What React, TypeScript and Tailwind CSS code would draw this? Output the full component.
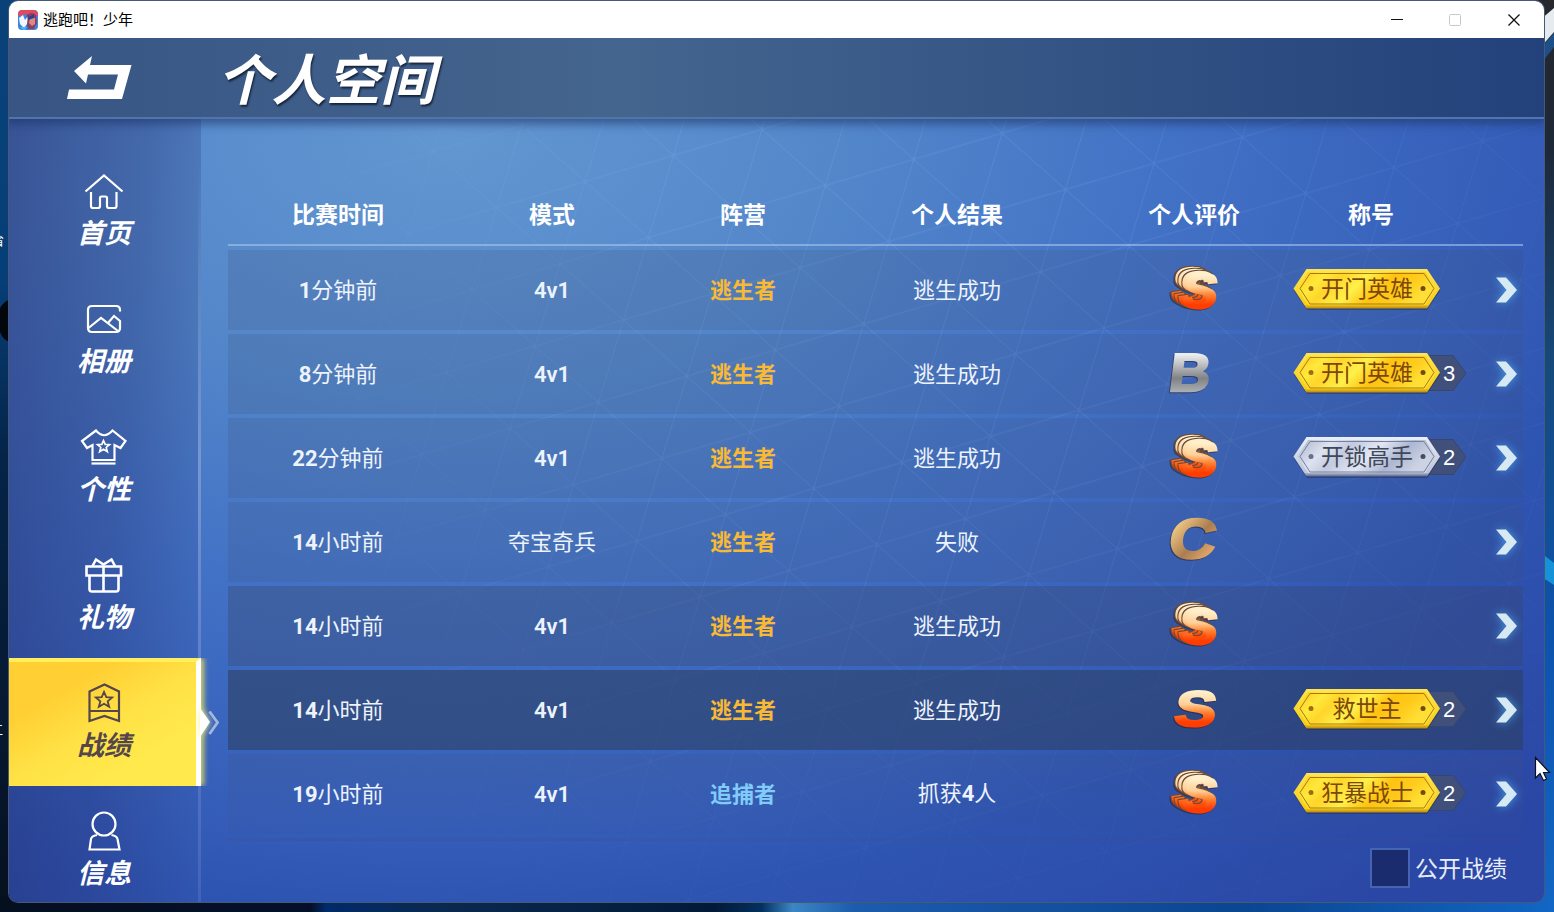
import { ReactNode } from "react";
import clsx from "clsx";

type Grade = "SSSS" | "S" | "B" | "C";

interface Match {
  time: [string, string];
  mode: string;
  hunter?: boolean;
  result: ReactNode;
  grade: Grade;
  title?: string;
  silver?: boolean;
  count?: number;
  bg: string;
}

const ROW_BG = "bg-[#40507a]/20";

const matches: Match[] = [
  { time: ["1", "分钟前"], mode: "4v1", result: "逃生成功", grade: "SSSS", title: "开门英雄", bg: ROW_BG },
  { time: ["8", "分钟前"], mode: "4v1", result: "逃生成功", grade: "B", title: "开门英雄", count: 3, bg: ROW_BG },
  { time: ["22", "分钟前"], mode: "4v1", result: "逃生成功", grade: "SSSS", title: "开锁高手", silver: true, count: 2, bg: ROW_BG },
  { time: ["14", "小时前"], mode: "夺宝奇兵", result: "失败", grade: "C", bg: ROW_BG },
  { time: ["14", "小时前"], mode: "4v1", result: "逃生成功", grade: "SSSS", bg: "bg-[#3a4468]/35" },
  { time: ["14", "小时前"], mode: "4v1", result: "逃生成功", grade: "S", title: "救世主", count: 2, bg: "bg-[#2d4062]/60" },
  {
    time: ["19", "小时前"],
    mode: "4v1",
    hunter: true,
    result: (
      <>
        抓获<b className="font-[Roboto] font-bold">4</b>人
      </>
    ),
    grade: "SSSS",
    title: "狂暴战士",
    count: 2,
    bg: "bg-linear-to-b from-[#40507a]/20 to-[#40507a]/5",
  },
];

const GRID = "grid grid-cols-[220px_208px_174px_254px_220px_134px_1fr] items-center";

const STAR = "M0 -7 L2 -2.4 L7 -2.1 L3.2 1.1 L4.5 6 L0 3.3 L-4.5 6 L-3.2 1.1 L-7 -2.1 L-2 -2.4 Z";

const navItems = [
  {
    label: "首页",
    icon: (
      <>
        <path d="M5.5 19.5 24 3.5 42.5 19.5" />
        <path d="M11 20v14q0 2 2 2h5q2 0 2-2v-8q0-1.500 1.500-1.500h4q1.500 0 1.500 1.500v8q0 2 2 2h5.500q2 0 2-2V20" />
      </>
    ),
  },
  {
    label: "相册",
    icon: (
      <>
        <path d="M40 11.500V10q0-4-4-4H12q-4 0-4 4v18q0 4 4 4h24q4 0 4-4v-7l-6-5-6.500 7.500" />
        <path d="M8.500 28 21 18l17 13" />
      </>
    ),
  },
  {
    label: "个性",
    icon: (
      <>
        <path d="M16 2.500 2 13l5 7 5.500-3V32h22V17l6 3 5-7L32.500 2.500Q24 12 16 2.500Z" />
        <path d="M11.500 35.500h24" />
        <path d={STAR} transform="translate(23.500 18.500) scale(.85)" strokeWidth="2" />
      </>
    ),
  },
  {
    label: "礼物",
    icon: (
      <>
        <path d="M6.500 10.500h34.500v9H6.500zM9.500 19.500V33q0 2.500 2.500 2.500h24q2.500 0 2.500-2.500V19.500M23.500 10.500v25" strokeWidth="2.600" />
        <path d="M12.500 10 16 3.500l7.500 5L31.500 3.500 35 10" strokeWidth="2.600" />
      </>
    ),
  },
  {
    label: "战绩",
    icon: (
      <>
        <path d="M9.500 7.500 24.500 0.500 39 7.500V37L24.500 32 9.500 37ZM9.500 27h29.500" />
        <path d={STAR} transform="translate(24 16) scale(1.150)" strokeWidth="1.600" />
      </>
    ),
  },
  {
    label: "信息",
    icon: (
      <>
        <circle cx="24" cy="12" r="11.500" />
        <path d="M17 23q-5.500 1-6 4L9.500 37.500h30L37.500 27q-.5-3-6-4" />
      </>
    ),
  },
];

const Wallpaper = () => (
  <svg className="absolute inset-0 h-full w-full" viewBox="0 0 1554 912" preserveAspectRatio="none">
    <defs>
      <linearGradient id="wallLeft" x1="0" y1="0" x2="0" y2="1">
        <stop offset="0" stopColor="#0a4278" />
        <stop offset=".3" stopColor="#063f78" />
        <stop offset=".5" stopColor="#052448" />
        <stop offset="1" stopColor="#06101f" />
      </linearGradient>
      <linearGradient id="wallRight" x1="0" y1="0" x2="0" y2="1">
        <stop offset="0" stopColor="#26282c" />
        <stop offset=".16" stopColor="#1d2838" />
        <stop offset=".4" stopColor="#164a7c" />
        <stop offset=".7" stopColor="#0d53ae" />
        <stop offset="1" stopColor="#1466c4" />
      </linearGradient>
      <linearGradient id="wallBottom" x1="0" y1="0" x2="1" y2="0">
        <stop offset="0" stopColor="#040f20" />
        <stop offset=".2" stopColor="#04102a" />
        <stop offset=".21" stopColor="#002a68" />
        <stop offset=".28" stopColor="#0a2950" />
        <stop offset=".46" stopColor="#021a38" />
        <stop offset=".49" stopColor="#03305e" />
        <stop offset=".51" stopColor="#3b86c4" />
        <stop offset=".55" stopColor="#1c5cac" />
        <stop offset=".8" stopColor="#0a4590" />
        <stop offset="1" stopColor="#1266c4" />
      </linearGradient>
    </defs>
    <rect width="1554" height="4" fill="#35394d" />
    <rect width="20" height="912" fill="url(#wallLeft)" />
    <rect x="1530" width="24" height="912" fill="url(#wallRight)" />
    <rect y="896" width="1554" height="16" fill="url(#wallBottom)" />
    <path d="M0 308q5-8 10-8v42Q3 340 0 332Z" fill="#02060d" />
    <path d="M1540 20 1554 8v24l-14 16Z" fill="#e6ebf0" />
    <path d="M1540 49 1554 33v14l-14 18Z" fill="#1d4f88" />
    <path d="M1540 552 1554 563v22l-14-9Z" fill="#1592d8" />
  </svg>
);

// Triangular lattice, one cell skewed along the two main directions
const Mesh = () => (
  <svg className="absolute inset-0 h-full w-full">
    <defs>
      <pattern
        id="mesh"
        width="100"
        height="100"
        patternUnits="userSpaceOnUse"
        patternTransform="matrix(.634 .562 -.25 .823 835.500 135.700)"
      >
        <path d="M0 50H100M50 0V100M0 100 100 0" fill="none" stroke="#9cc4ff" strokeWidth="1.300" />
        <circle cx="50" cy="50" r="2.300" fill="#9cc4ff" />
      </pattern>
      <linearGradient id="meshFade" x1="0" y1="0" x2="1" y2="0">
        <stop offset=".15" stopColor="#fff" stopOpacity="0" />
        <stop offset=".45" stopColor="#fff" stopOpacity=".16" />
        <stop offset=".7" stopColor="#fff" stopOpacity=".15" />
        <stop offset="1" stopColor="#fff" stopOpacity=".05" />
      </linearGradient>
      <linearGradient id="meshDown" x1="0" y1="0" x2="0" y2="1">
        <stop offset=".45" stopColor="#000" stopOpacity="0" />
        <stop offset=".95" stopColor="#000" stopOpacity=".8" />
      </linearGradient>
      <mask id="meshMask">
        <rect width="100%" height="100%" fill="url(#meshFade)" />
        <rect width="100%" height="100%" fill="url(#meshDown)" />
      </mask>
    </defs>
    <rect width="100%" height="100%" fill="url(#mesh)" mask="url(#meshMask)" />
  </svg>
);

const TitleBar = () => (
  <div className="relative z-20 flex h-[37px] shrink-0 items-center bg-white pl-[9px]">
    <svg width="20" height="20" viewBox="0 0 20 20">
      <rect width="20" height="20" rx="4" fill="#3d86de" />
      <path d="M0 5q0-5 5-5h10q5 0 5 5v1L10 4 0 6Z" fill="#e5485a" />
      <path d="M9 5q5-4 9 0l1 8-3 6h-6l-2-8Z" fill="#8a3f63" />
      <path d="M12 8h5v6l-3 2-3-3Z" fill="#d98a84" />
      <path d="M1 8 5 5l2 5 3-4-1 8-3 4-4-4Z" fill="#f1f6ff" />
      <path d="M9 4l2 3 5-3v4l-6 2Z" fill="#33408f" />
      <path d="M2 17h7l-2 3H5Z" fill="#4fb4f2" />
    </svg>
    <span className="ml-[5px] pb-[2px] text-[15px] leading-5 text-black">逃跑吧！少年</span>
    <svg className="mr-[23px] ml-auto" width="130" height="14" viewBox="0 0 130 14" fill="none">
      <path d="M0 6.500h12" stroke="#111" />
      <rect x="58.500" y="1.500" width="11" height="11" rx="1" stroke="#c8c8c8" />
      <path d="M117.500 1.500 128.500 12.500M128.500 1.500 117.500 12.500" stroke="#111" strokeWidth="1.300" />
    </svg>
  </div>
);

const Header = () => (
  <header className="relative z-10 h-[81px] shrink-0 border-b-2 border-[#5175aa] bg-linear-to-r from-[#385584] via-[#44658e] via-40% to-[#23417b] shadow-[0_2px_9px_3px_rgba(28,50,100,0.6)]">
    <div className="flex h-full items-center">
      <svg className="ml-[58px]" width="66" height="46" viewBox="0 0 66 46">
        <path d="M25 1 7 16 19 28.500 21 19.500H51L47 34.500H2L0 44H55L64.500 10H23Z" fill="#fff" />
      </svg>
      <h1 className="ml-[84px] text-[54.5px] leading-none font-bold whitespace-nowrap text-white italic [text-shadow:1px_2px_2px_rgba(15,25,45,0.85)]">
        个人空间
      </h1>
    </div>
  </header>
);

const Sidebar = () => (
  <nav className="relative w-[192px] shrink-0 bg-[linear-gradient(95deg,rgba(34,40,104,0.52),rgba(38,52,120,0.38)_55%,rgba(60,95,170,0.12))] pt-[27px]">
    <div className="absolute top-[40px] right-0 bottom-0 w-[3px] bg-linear-to-b from-[#7f9fd6]/0 via-[#84a0d6]/80 via-40% to-[#4a68bc]/70" />
    {navItems.map(({ label, icon }) => {
      const active = label === "战绩";
      return (
        <div
          key={label}
          className={clsx(
            "relative flex h-[128px] flex-col items-center",
            active
              ? "border-t-4 border-r-[5px] border-t-[#ffef5c] border-r-white bg-[linear-gradient(150deg,#ffcf33_25%,#ffe145_50%,#ffe94c_75%)] pt-[22px] text-[#54464a] shadow-[3px_0_5px_rgba(255,240,80,0.75)] [clip-path:inset(0_-26px_0_0)]"
              : "pt-[26px] text-white"
          )}
        >
          <svg
            className={clsx("overflow-visible", active ? "ml-[3px]" : "-ml-[2px]")}
            width="48"
            height="38"
            viewBox="0 0 48 38"
            fill="none"
            stroke="currentColor"
            strokeWidth="2.200"
          >
            {icon}
          </svg>
          <span
            className={clsx(
              "mt-[7px] text-[27px] leading-[30px] font-bold italic",
              active ? "ml-[3px]" : "-ml-[2px]"
            )}
          >
            {label}
          </span>
          {active && (
            <svg className="absolute top-[42px] -right-[24px] overflow-visible" width="20" height="36" viewBox="0 0 20 36">
              <path d="M0 4 10 18 0 33Z" fill="#fff" className="drop-shadow-[0_0_3px_#fff27a]" />
              <path d="M9.500 7.500 17.500 18.500 9.500 30" fill="none" stroke="#a3b7da" strokeWidth="2.800" />
            </svg>
          )}
        </div>
      );
    })}
  </nav>
);

const SharedDefs = () => (
  <svg className="absolute h-0 w-0">
    <defs>
      <linearGradient id="gradeS" x1="0" y1="0" x2="0" y2="1">
        <stop offset=".2" stopColor="#fff0cc" />
        <stop offset=".42" stopColor="#ffcf96" />
        <stop offset=".56" stopColor="#ff8434" />
        <stop offset=".74" stopColor="#ff3d00" />
      </linearGradient>
      <linearGradient id="gradeB" x1="0" y1="0" x2="0" y2="1">
        <stop offset=".2" stopColor="#eceef0" />
        <stop offset=".6" stopColor="#808285" />
        <stop offset=".82" stopColor="#aaaeb2" />
      </linearGradient>
      <linearGradient id="gradeC" x1="0" y1="0" x2="1" y2="1">
        <stop offset=".15" stopColor="#f7d08a" />
        <stop offset=".55" stopColor="#ab7d4f" />
        <stop offset=".85" stopColor="#e6ab6c" />
      </linearGradient>
      {/* Repeats the letter three times behind itself, each with a dark rim */}
      <filter id="stack" x="-60%" y="-30%" width="200%" height="160%" colorInterpolationFilters="sRGB">
        <feMorphology in="SourceAlpha" operator="dilate" radius=".5" result="fat" />
        <feFlood floodColor="#6b4c3a" />
        <feComposite in2="fat" operator="in" result="rim" />
        <feMerge result="edged">
          <feMergeNode in="rim" />
          <feMergeNode in="SourceGraphic" />
        </feMerge>
        <feOffset in="edged" dx="-11.500" dy="-6" result="c3" />
        <feOffset in="edged" dx="-7.600" dy="-4.200" result="c2" />
        <feOffset in="edged" dx="-3.800" dy="-2.200" result="c1" />
        <feMerge>
          <feMergeNode in="c3" />
          <feMergeNode in="c2" />
          <feMergeNode in="c1" />
          <feMergeNode in="SourceGraphic" />
        </feMerge>
      </filter>
      <linearGradient id="gold" x1="0" y1="0" x2="1" y2=".25">
        <stop offset="0" stopColor="#ffc71c" />
        <stop offset=".2" stopColor="#ffe93c" />
        <stop offset=".32" stopColor="#ffd52a" />
        <stop offset=".5" stopColor="#fff04a" />
        <stop offset=".68" stopColor="#ffc311" />
        <stop offset=".85" stopColor="#ffcb1c" />
        <stop offset="1" stopColor="#ffdf35" />
      </linearGradient>
      <linearGradient id="goldEdge" x1="0" y1="0" x2="0" y2="1">
        <stop offset="0" stopColor="#ffe552" />
        <stop offset=".9" stopColor="#f8cc18" />
        <stop offset="1" stopColor="#b8860c" />
      </linearGradient>
      <linearGradient id="silver" x1="0" y1="0" x2="1" y2=".25">
        <stop offset="0" stopColor="#a9b2cc" />
        <stop offset=".25" stopColor="#dde3f0" />
        <stop offset=".4" stopColor="#c3cadf" />
        <stop offset=".6" stopColor="#e2e7f3" />
        <stop offset=".8" stopColor="#adb7d2" />
        <stop offset="1" stopColor="#ccd3e3" />
      </linearGradient>
      <linearGradient id="silverEdge" x1="0" y1="0" x2="0" y2="1">
        <stop offset="0" stopColor="#eaeef6" />
        <stop offset=".9" stopColor="#bcc4d8" />
        <stop offset="1" stopColor="#5a6488" />
      </linearGradient>
    </defs>
  </svg>
);

const letters = {
  SSSS: { char: "S", fill: "url(#gradeS)", transform: "translate(12 43.3) skewX(-8) scale(1.04 .98)" },
  S: { char: "S", fill: "url(#gradeS)", transform: "translate(3.5 41.3) skewX(-8) scale(1.26 1)" },
  B: { char: "B", fill: "url(#gradeB)", transform: "translate(-1.5 41.7) skewX(-7) scale(1.14 1.07)" },
  C: { char: "C", fill: "url(#gradeC)", transform: "translate(-2 41) skewX(-8) scale(1.29 1.12)" },
};

const GradeIcon = ({ grade }: { grade: Grade }) => {
  const { char, fill, transform } = letters[grade];
  return (
    <svg
      className="overflow-visible drop-shadow-[-1px_1px_0_rgba(40,35,60,0.6)]"
      width="50"
      height="50"
      viewBox="0 0 50 50"
    >
      <g filter={grade === "SSSS" ? "url(#stack)" : undefined}>
        <text
          transform={transform}
          fontSize="50"
          fill={fill}
          stroke={fill}
          strokeWidth="2.200"
          className="font-['Liberation_Sans'] font-bold"
        >
          {char}
        </text>
      </g>
    </svg>
  );
};

const TitleBadge = ({ title, silver, count }: { title: string; silver?: boolean; count?: number }) => (
  <div className="relative -ml-[11px] h-[44px] w-[174px]">
    <svg className="absolute inset-0" width="174" height="44" viewBox="0 0 174 44">
      {count && <path d="M134 3.500H160L173 21 160 38.500H134Z" fill="#40507a" stroke="#37466c" />}
      <path d="M14 42 1 23 14 4H134L147 23 134 42Z" fill="#1c2a55" opacity=".45" />
      <path
        d="M13.500 40.500.500 20.500 13.500 1H134L147 20.500 134 40.500Z"
        fill={silver ? "url(#silverEdge)" : "url(#goldEdge)"}
      />
      <path
        d="M15 37 4.500 20.500 15 4H132.500L143 20.500 132.500 37Z"
        fill={silver ? "url(#silver)" : "url(#gold)"}
      />
      <path
        d="M17 36 7 20.500 17 5.500H131L141 20.500 131 36Z"
        fill="none"
        stroke={silver ? "#76809f" : "#a8780e"}
      />
      <circle cx="18" cy="20.500" r="2.500" fill={silver ? "#68708c" : "#a06c10"} />
      <circle cx="130" cy="20.500" r="2.500" fill={silver ? "#454c66" : "#744a08"} />
    </svg>
    <div className="relative flex h-[41px]">
      <span
        className={clsx(
          "w-[148px] text-center text-[23px] leading-[38px]",
          silver ? "text-[#40475a]" : "text-[#7c480a]"
        )}
      >
        {title}
      </span>
      {count && (
        <span className="ml-[2px] font-['Liberation_Sans'] text-[22px] leading-[44px] text-white">{count}</span>
      )}
    </div>
  </div>
);

const MatchRow = ({ time, mode, hunter, result, grade, title, silver, count, bg }: Match) => (
  <div className={clsx(GRID, "h-[80px] text-center text-[22px] leading-[30px] text-[#edf3fc]", bg)}>
    <div className="pb-[2px]">
      <b className="font-[Roboto] font-bold">{time[0]}</b>
      {time[1]}
    </div>
    <div className={clsx(mode === "4v1" ? "pt-[2px] font-[Roboto] font-semibold" : "pb-[5px]")}>{mode}</div>
    <div className={clsx("pb-[5px] font-bold", hunter ? "text-[#80cbf8]" : "text-[#f9b935]")}>
      {hunter ? "追捕者" : "逃生者"}
    </div>
    <div className={hunter ? "pb-[3px]" : "pb-[5px]"}>{result}</div>
    <div className="flex justify-center">
      <GradeIcon grade={grade} />
    </div>
    <div>{title && <TitleBadge title={title} silver={silver} count={count} />}</div>
    <div className="flex justify-end pr-[6px] pb-px">
      <svg
        className="overflow-visible drop-shadow-[0_0_5px_rgba(80,180,255,0.75)]"
        width="21"
        height="26"
        viewBox="0 0 21 26"
      >
        <path d="M0 .5H10L21 13 10 25.500H0L10.500 13Z" fill="#d7e9f3" />
      </svg>
    </div>
  </div>
);

const Records = () => (
  <main className="relative flex-1">
    <div className="mr-[21px] ml-[27px] pt-[65px]">
      <div className={clsx(GRID, "h-[62px] border-b-2 border-[#a9c4ea]/60 pb-[2px] text-center text-[23px] font-bold text-white")}>
        {["比赛时间", "模式", "阵营", "个人结果", "个人评价", "称号"].map((name) => (
          <div key={name}>{name}</div>
        ))}
      </div>
      <div className="mt-1 flex flex-col gap-1">
        {matches.map((match, i) => (
          <MatchRow key={i} {...match} />
        ))}
        <div className="h-[3px] bg-[#40507a]/20" />
      </div>
    </div>
    <div className="mt-[7px] flex items-center justify-end pr-[37px]">
      <div className="h-[40px] w-[40px] border-2 border-[#4564b4] bg-[#1b2c6e]" />
      <span className="ml-[5px] pb-[2px] text-[23px] leading-[36px] text-[#e6ecf8]">公开战绩</span>
    </div>
  </main>
);

export default function App() {
  return (
    <div className="relative h-screen w-screen overflow-hidden bg-[#061633] font-['Noto_Sans_CJK_SC',sans-serif]">
      <Wallpaper />
      {/* Clipped desktop icon labels */}
      <span className="absolute top-[233px] -left-[8px] text-[12px] leading-4 text-white">省</span>
      <span className="absolute top-[722px] -left-[9px] text-[12px] leading-4 text-white">工</span>

      <SharedDefs />
      <div className="relative mt-px ml-[9px] flex h-[901px] w-[1535px] flex-col overflow-hidden rounded-[9px] shadow-[0_0_0_1px_#47597a]">
        <TitleBar />
        <Header />
        <div className="relative flex min-h-0 flex-1 bg-[radial-gradient(1300px_850px_at_440px_10px,#6397d1,#5387ca_30%,#4272c6_55%,#365fba_80%,#2e54b2_92%,#2b47a5_115%)]">
          <Mesh />
          <Sidebar />
          <Records />
        </div>
      </div>

      <svg className="absolute top-[756px] left-[1534px]" width="18" height="26" viewBox="0 0 18 26">
        <path d="M1.500 1.500V22L6 17.500 9.500 24.500 12.500 23 9.500 16.500H15.500Z" fill="#fff" stroke="#0a1020" strokeWidth="1.200" />
      </svg>
    </div>
  );
}
